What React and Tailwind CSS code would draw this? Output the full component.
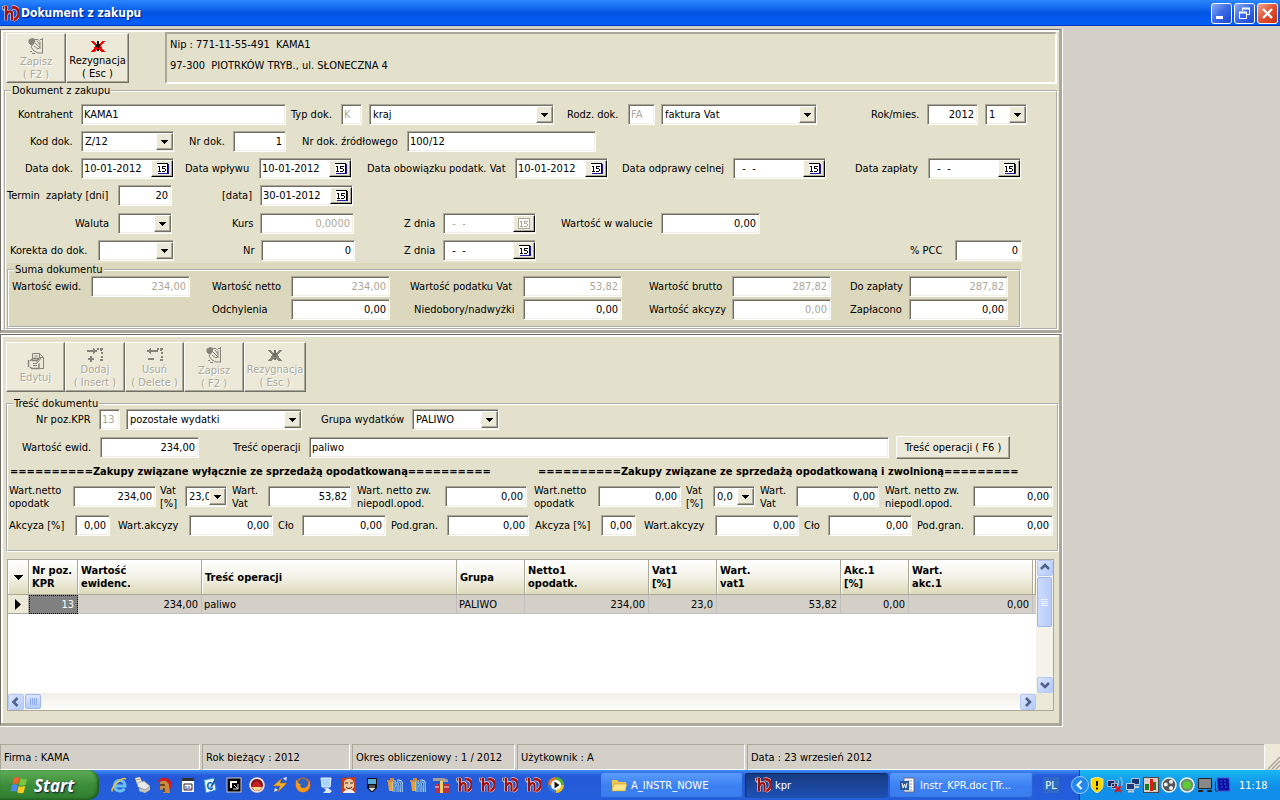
import React from "react";

const SUNKEN =
  "border border-t-[#aca899] border-l-[#aca899] border-r-white border-b-white bg-white shadow-[inset_1px_1px_0_#716f64,inset_-1px_-1px_0_#f1efe2]";
const RAISED =
  "bg-[#ece9d8] border border-t-white border-l-white border-r-[#716f64] border-b-[#716f64] shadow-[inset_-1px_-1px_0_#aca899]";

function slug(text) {
  return text.toLowerCase().replace(/[^a-z0-9ąćęłńóśźż]+/g, "-");
}

function Label({ id, l, children }) {
  return (
    <label htmlFor={id} className={`shrink-0 whitespace-pre leading-[13px] ${l}`}>
      {children}
    </label>
  );
}

function Text({ id, label, l = "", w, value, right, off, alt }) {
  const name = id || slug(label);
  return (
    <>
      {label && <Label id={name} l={l}>{label}</Label>}
      <input
        id={name}
        aria-label={alt}
        defaultValue={value}
        disabled={off}
        className={`h-[21px] shrink-0 rounded-none outline-none ${SUNKEN} ${w} ${right ? "pr-[3px] text-right" : "pl-[2px]"} ${off ? "text-[#aca899]" : "text-black"}`}
      />
    </>
  );
}

function Select({ id, label, l = "", w, value, alt }) {
  const name = id || slug(label);
  return (
    <>
      {label && <Label id={name} l={l}>{label}</Label>}
      <span className={`flex h-[21px] shrink-0 py-px pl-px ${SUNKEN} ${w}`}>
        <select
          id={name}
          aria-label={alt}
          defaultValue={value}
          className="min-w-0 flex-1 appearance-none overflow-hidden bg-transparent pl-[2px] outline-none"
        >
          <option>{value}</option>
        </select>
        <span className={`flex w-[17px] shrink-0 items-center justify-center ${RAISED}`}>
          <svg width="7" height="4" viewBox="0 0 7 4" shapeRendering="crispEdges" aria-hidden="true">
            <path d="M0 0h7v1h-1v1h-1v1h-1v1h-1v-1h-1v-1h-1v-1h-1z" fill="#000" />
          </svg>
        </span>
      </span>
    </>
  );
}

function DateField({ id, label, l = "", value, off }) {
  const name = id || slug(label);
  const ink = off ? "#aca899" : "#000";
  return (
    <>
      <Label id={name} l={l}>{label}</Label>
      <span className={`flex h-[21px] w-[93px] shrink-0 py-px pl-px ${SUNKEN}`}>
        <input
          id={name}
          defaultValue={value}
          disabled={off}
          className={`min-w-0 flex-1 bg-transparent pl-px outline-none ${off ? "text-[#aca899]" : "text-black"}`}
        />
        <button
          type="button"
          aria-label="Kalendarz"
          disabled={off}
          className="flex w-[22px] shrink-0 items-center justify-center border border-t-white border-l-white border-r-black border-b-black bg-[#ece9d8] shadow-[inset_-1px_-1px_0_#aca899]"
        >
          <svg width="13" height="12" viewBox="0 0 13 12" shapeRendering="crispEdges" aria-hidden="true">
            {!off && <path d="M2 11h11v-10h-1v9h-10z" fill="#1c1c9c" />}
            <path d="M1 1h10v9h-10z" fill="#fff" />
            <path d={off ? "M0 0h12v11h-12zM1 1v9h10v-9z" : "M1 0h11v10h-1v-9h-10z"} fillRule="evenodd" fill={ink} />
            <path d="M3 3h1v5h1v1h-3v-1h1v-4h-1v-1zM6 3h4v1h-3v1h2v1h1v2h-1v1h-3v-1h3v-2h-3z" fill={ink} />
          </svg>
        </button>
      </span>
    </>
  );
}

function Row({ h = "h-[27px]", children, className = "" }) {
  return <div className={`flex items-center ${h} ${className}`}>{children}</div>;
}

/* ---- toolbar ---- */
function HandIcon({ edit }) {
  return edit ? (
    <svg width="18" height="18" viewBox="0 0 18 18" fill="none" stroke="#85837a" aria-hidden="true">
      <path d="M5.500 6V1.500h7l4 4v11h-4M12.500 1.500v4h4M7.500 4h3" />
      <path d="M1.500 8v7M3 9l3-2.500h6l-3 3M5 8.500l4 0M3 15l2 1.500h7v-5" strokeWidth="1.400" />
      <path d="M6 11.500h4M6 13.500h4M10 11l5-6" />
    </svg>
  ) : (
    <svg width="16" height="16" viewBox="0 0 16 16" fill="none" stroke="#85837a" aria-hidden="true">
      <path d="M1 2l3-1.500 3 1-1 4-3 1.500-2-2z" fill="#85837a" />
      <path d="M6 1.500h4l2 2M14.500 0v15M12 1.500h3M12 4v7M5 6l-2 3 3 4 4 2h5M7 5l4 4M9 3l3 4M6 8l4 3 2-2" />
      <path d="M2 13.500h2M4 15.500h3" />
    </svg>
  );
}
function CancelIcon({ off }) {
  return (
    <svg width="14" height="14" viewBox="0 0 14 14" shapeRendering="crispEdges" aria-hidden="true">
      <path d="M0 2h3v1h1v1h1v1h4v-1h1v-1h1v-1h3v1h-1v1h-1v1h-1v1h-1v2h1v2h1v1h1v1h1v1h-4v-1h-1v-1h-1v-1h-2v1h-1v1h-1v1h-4v-1h1v-1h1v-1h1v-2h1v-2h-1v-1h-1v-1h-1v-1h-1z" fill={off ? "#85837a" : "#f00"} />
      <path d="M6 2h2v3h1v3h-1v1h-2v-1h-1v-3h1zM6 10h2v2h-2z" fill={off ? "#6f6d66" : "#111"} />
    </svg>
  );
}
function RowIcon({ remove }) {
  return (
    <svg width="16" height="15" viewBox="0 0 16 15" fill="#85837a" shapeRendering="crispEdges" aria-hidden="true">
      <path d="M13 1h3v2h-1v1h-2zM14 5h2v2h-2zM14 9h2v2h-2zM13 12h3v2h-3zM10 1h2v2h-2z" />
      {remove ? (
        <path d="M0 3h2v-1h1v-1h1v2h7v2h-7v2h-1v-1h-1v-1h-2zM1 11h6v2h-6z" />
      ) : (
        <path d="M0 3h6v-2h1v1h1v1h2v2h-2v1h-1v1h-1v-2h-6zM3 9h2v2h2v2h-2v2h-2v-2h-2v-2h2z" />
      )}
    </svg>
  );
}
function ToolButton({ w, icon, lines, off = true }) {
  return (
    <button
      type="button"
      disabled={off}
      className={`flex h-[50px] shrink-0 flex-col items-center justify-center pt-[2px] leading-[13px] ${w} ${RAISED} ${off ? "text-[#aca899] [text-shadow:1px_1px_0_#fff]" : "text-black"}`}
    >
      <span className="mb-px flex">{icon}</span>
      {lines.map((t) => (
        <span key={t} className="whitespace-nowrap">{t}</span>
      ))}
    </button>
  );
}

function Frame({ children }) {
  return (
    <div className="w-full max-w-[1063px] border-r border-b border-white">
      <div className="border-t border-r-[3px] border-b-[3px] border-l border-t-[#716f64] border-r-[#aca899] border-b-[#aca899] border-l-[#716f64] bg-[#e3e0cc]">
        <div className="border-t-2 border-l-2 border-white pl-px">{children}</div>
      </div>
    </div>
  );
}

function Group({ title, children, className = "" }) {
  return (
    <fieldset className={`min-w-0 border-2 border-white [border-style:groove] ${className}`}>
      <legend className="ml-[5px] h-[13px] px-px leading-[13px]">{title}</legend>
      {children}
    </fieldset>
  );
}

/* ---- list ---- */
const COLUMNS = [
  { t: ["Nr poz.", "KPR"], w: "w-[49px]", v: "13", right: true, active: true },
  { t: ["Wartość", "ewidenc."], w: "w-[124px]", v: "234,00", right: true },
  { t: ["Treść operacji"], w: "w-[255px]", v: "paliwo" },
  { t: ["Grupa"], w: "w-[68px]", v: "PALIWO" },
  { t: ["Netto1", "opodatk."], w: "w-[124px]", v: "234,00", right: true },
  { t: ["Vat1", "[%]"], w: "w-[68px]", v: "23,0", right: true },
  { t: ["Wart.", "vat1"], w: "w-[124px]", v: "53,82", right: true },
  { t: ["Akc.1", "[%]"], w: "w-[68px]", v: "0,00", right: true },
  { t: ["Wart.", "akc.1"], w: "w-[124px]", v: "0,00", right: true },
];

const ARROWS = {
  up: "M4 9l4-4 4 4",
  down: "M4 6l4 4 4-4",
  left: "M9.500 4l-4 4 4 4",
  right: "M6 4l4 4-4 4",
};
function ScrollButton({ dir, name }) {
  return (
    <button
      type="button"
      aria-label={name}
      className="flex size-[16px] shrink-0 items-center justify-center rounded-[2px] border border-[#b4c8f6] bg-gradient-to-br from-[#dbe5fe] to-[#b4cafb]"
    >
      <svg width="16" height="16" viewBox="0 0 16 16" className="shrink-0" fill="none" stroke="#4d6185" strokeWidth="2.500" aria-hidden="true">
        <path d={ARROWS[dir]} />
      </svg>
    </button>
  );
}

function Grid() {
  const head = "h-[35px] border-r border-b border-[#aca899] bg-gradient-to-b from-white via-[#f3f2e8] to-[#dedabb] text-left align-middle leading-[13px] font-bold shadow-[inset_1px_0_0_#fff]";
  return (
    <div className="mt-[7px] mr-[5px] ml-[3px] flex h-[152px] border border-[#aca899] bg-white">
      <div className="flex min-w-0 flex-1 flex-col">
        <div className="flex-1 overflow-hidden">
          <table className="w-full table-fixed border-separate border-spacing-0">
            <thead>
              <tr>
                <th className={`w-[21px] ${head}`} aria-label="Kolumny">
                  <svg width="9" height="5" viewBox="0 0 9 5" className="mx-auto" shapeRendering="crispEdges" aria-hidden="true">
                    <path d="M0 0h9l-4 5h-1z" />
                  </svg>
                </th>
                {COLUMNS.map((c, i) => (
                  <th key={i} scope="col" className={`pl-[3px] ${c.w} ${head}`}>
                    {c.t.map((t) => (
                      <span key={t} className="block whitespace-nowrap">{t}</span>
                    ))}
                  </th>
                ))}
                <th className={head} aria-label="Dalsze kolumny" />
              </tr>
            </thead>
            <tbody>
              <tr>
                <td className="h-[19px] border-r border-b border-[#aca899] bg-[#ece9d8]">
                  <svg width="6" height="11" viewBox="0 0 6 11" className="mx-auto" aria-hidden="true">
                    <path d="M0 0l6 5.500-6 5.500z" />
                  </svg>
                </td>
                {COLUMNS.map((c, i) => (
                  <td
                    key={i}
                    className={`h-[19px] border-r border-b pr-[3px] pl-[2px] leading-[13px] ${c.right ? "text-right" : ""} ${c.active ? "border border-dotted border-black bg-[#808080] text-white" : "border-[#c0c0c0] bg-[#d4d0c8]"}`}
                  >
                    {c.v}
                  </td>
                ))}
                <td className="border-b border-[#c0c0c0] bg-[#d4d0c8]" />
              </tr>
            </tbody>
          </table>
        </div>
        <div className="flex h-[17px] items-center bg-gradient-to-b from-[#f1efe8] to-[#fdfdfa]">
          <ScrollButton dir="left" name="W lewo" />
          <span className="ml-px flex h-[15px] w-[16px] items-center justify-center gap-px rounded-[2px] border border-[#9db6f0] bg-gradient-to-b from-[#dbe5fe] to-[#b4cafb]">
            {[0, 1, 2, 3].map((i) => (
              <i key={i} className="h-[7px] w-px bg-[#8caaf0]" />
            ))}
          </span>
          <span className="flex-1" />
          <ScrollButton dir="right" name="W prawo" />
        </div>
      </div>
      <div className="flex w-[17px] shrink-0 flex-col items-center bg-[#f4f2ea]">
        <ScrollButton dir="up" name="W górę" />
        <span className="mt-px flex h-[50px] w-[15px] flex-col items-center justify-center gap-px rounded-[2px] border border-[#9db6f0] bg-gradient-to-r from-[#cbdafd] to-[#b9cdfb]">
          {[0, 1, 2, 3].map((i) => (
            <i key={i} className="h-px w-[7px] bg-[#eef4fe]" />
          ))}
        </span>
        <span className="flex-1" />
        <ScrollButton dir="down" name="W dół" />
        <span className="h-[17px] w-full bg-[#ece9d8]" />
      </div>
    </div>
  );
}

/* ---- application mark and taskbar drawings ---- */
function KprMark({ s = 16 }) {
  return (
    <svg width={s} height={s} viewBox="0 0 16 16" aria-hidden="true">
      <path d="M0 1l5-1v5l-3 1-2-2z" fill="#b4b0b0" />
      <path d="M1 1.500l4-1v4l-4-1z" fill="#8c1818" />
      <path d="M9 2.500c8-2 9 9 2 11.500" fill="none" stroke="#e8c8c8" strokeWidth="3.800" />
      <path d="M9 2.500c8-2 9 9 2 11.500" fill="none" stroke="#a81414" strokeWidth="2.600" />
      <path d="M4 1v13.500M4.500 8.500c1.500-3.500 5-3 5 0v6" fill="none" stroke="#f0e0e0" strokeWidth="3.400" />
      <path d="M4 1v13.500M4.500 8.500c1.500-3.500 5-3 5 0v6" fill="none" stroke="#9c1010" strokeWidth="2.200" />
    </svg>
  );
}
function HMark() {
  return (
    <svg width="16" height="16" viewBox="0 0 16 16" aria-hidden="true">
      <path d="M1 5h7l-1 9h-5z" fill="#e8a23c" />
      <path d="M0 3h9v2h-9zM3 1h4v2h-4z" fill="#c98a4a" />
      <path d="M7 4v11M7.500 9c1-3 3.500-3 3.500 0v6M10 4c6-1 5 4 4.500 11" fill="none" stroke="#d8ecfa" strokeWidth="2.600" />
      <path d="M7 4v11M7.500 9c1-3 3.500-3 3.500 0v6M10 4c6-1 5 4 4.500 11" fill="none" stroke="#3c88c8" strokeWidth="1.500" />
    </svg>
  );
}
const I = ({ children }) => (
  <svg width="16" height="16" viewBox="0 0 16 16" aria-hidden="true">{children}</svg>
);
const LAUNCH = [
  ["Internet Explorer", <I><path d="M3 9h11c.5-7-10-7.500-10.500-1-.3 7 7.500 7.500 10 3.500" fill="none" stroke="#6cc0f8" strokeWidth="3" /><path d="M1.500 14.500c-3-3 9-15 13.500-12.500" fill="none" stroke="#f4c430" strokeWidth="1.500" /></I>],
  ["Drukarka", <I><path d="M1 1l5-1 2 5-5 2z" fill="#f0ead0" /><path d="M3 6l7-2 6 5-5 4-7-3z" fill="#e8e8e8" stroke="#888" strokeWidth=".6" /><path d="M5 11l6 2 5-4v4l-5 3-6-2z" fill="#c8c4b4" /><path d="M2 3l4-1" stroke="#c8a050" /></I>],
  ["Rome", <I><path d="M0 5c3-6 13-6 15 2l-1 5-3-4c-2-4-6-5-11-3z" fill="#cc1c1c" /><path d="M3 5c5-3 9 0 9 4l1 7H6l1-4-4 1z" fill="#c98a3c" /><path d="M3 8h5M7 11v4" stroke="#5a3010" strokeWidth="1.500" /></I>],
  ["Terminarz", <I><rect x="2" y="1" width="12" height="14" fill="#fff" /><path d="M2 1h12v3h-12z" fill="#333" /><path d="M4 7h8v6h-8z" fill="none" stroke="#223" /><path d="M5 10h2M9 9v3M5 12h3" stroke="#2244cc" /><path d="M10 12h2" stroke="#d22" /></I>],
  ["Edytor", <I><path d="M1 3l10-2 2 12-10 3z" fill="#e8f4ff" stroke="#2a90d8" /><path d="M9 6c-5-2-6 6-1 6l2-1" fill="none" stroke="#1470c0" strokeWidth="1.800" /><path d="M13 0l2 2-6 8-2 1 1-3z" fill="#2060b0" /></I>],
  ["Konsola", <I><rect x="1" y="1" width="14" height="14" fill="#000" stroke="#ccc" /><path d="M4 4h7v2h-5v5h-2z" fill="#fff" /><path d="M8 8l4 4M12 7v5h-5" stroke="#ddd" fill="none" /></I>],
  ["Przeglądarka", <I><circle cx="8" cy="8" r="7.800" fill="#f4e0d8" /><circle cx="8" cy="8" r="6" fill="#7c1414" /><path d="M3 10c1-5 4-6 5-6s4 2 5 6z" fill="#c82020" /><path d="M3 10h10c-1 5-9 5-10 0z" fill="#f8d890" /></I>],
  ["Winamp", <I><path d="M1 9l9-8-2 5h7l-9 9 2-6z" fill="#f0b030" stroke="#a86810" strokeWidth=".6" /><path d="M11 1l4-1-1 4zM2 15l1-4 3 2z" fill="#e8e8e8" /></I>],
  ["Firefox", <I><circle cx="8" cy="8" r="7.500" fill="#e66a10" /><circle cx="8" cy="6.500" r="5" fill="#2b64c0" /><path d="M1 2c-1 10 3 13 7 13s8-4 7-12c-1 5-3 8-6 8-3 0-5-2-3-4-3 0-4-2-5-5z" fill="#f89a1c" /></I>],
  ["Pulpit", <I><path d="M3 1h10l-1 9h-8z" fill="#a8d4ff" stroke="#e8f4ff" /><path d="M6 11h4l4 3-2 2h-7l3-3z" fill="#dfe8f0" /></I>],
  ["Gra", <I><path d="M1 1l14-1v16H0z" fill="#c83c10" /><path d="M3 5c2-5 9-4 10 1v4c-2 4-8 4-10 1z" fill="#f0c8a0" /><path d="M4 6h3M9 6h3M5 10c2 2 4 2 6 0" stroke="#402010" fill="none" /><path d="M2 16c2-5 10-5 12 0z" fill="#eee" /></I>],
  ["Pobieranie", <I><path d="M3 1h10v10l-4 4h-2l-4-4z" fill="#111" /><path d="M4 2h8v5h-8z" fill="#5aa8d8" /><path d="M5 9h6M5 11h6l-3 3z" fill="#ddd" stroke="#ddd" strokeWidth=".6" /></I>],
  ["Handel", <HMark />],
  ["Magazyn", <HMark />],
  ["Narzędzia", <I><path d="M0 1h11l4 2v2H8v-1H0z" fill="#a8a090" /><path d="M7 4h3v12H7z" fill="#f0d060" /><path d="M2 7h4v9H2zM11 7h5v9h-5z" fill="#b83048" /><path d="M2 10h4M11 10h5" stroke="#f8d8d8" /></I>],
  ["KPR 1", <KprMark />],
  ["KPR 2", <KprMark />],
  ["KPR 3", <KprMark />],
  ["KPR 4", <KprMark />],
  ["Media Player", <I><path d="M0 8a8 8 0 0 1 8-8v4L4 8z" fill="#e87830" /><path d="M8 0a8 8 0 0 1 8 8h-4L8 4z" fill="#58b030" /><path d="M0 8h4l4 4v4a8 8 0 0 1-8-8z" fill="#3478d8" /><path d="M16 8h-4l-4 4v4a8 8 0 0 0 8-8z" fill="#f0c020" /><circle cx="8" cy="8" r="5" fill="#fff" /><path d="M6.500 4.500l5 3.500-5 3.500z" fill="#111" /></I>],
];

const TRAY = [
  ["Zabezpieczenia", <I><path d="M2 2l6-2 6 2v6c0 4-3 6-6 8-3-2-6-4-6-8z" fill="#fcd800" stroke="#f8f0c0" strokeWidth=".8" /><path d="M8 4v5M8 10.500v2" stroke="#111" strokeWidth="2" /></I>],
  ["Sieć bezprzewodowa", <I><path d="M0.500 3.500h7v6h-7zM4.500 6.500h6v5h-6z" fill="#1c2c60" stroke="#a8b4cc" /><path d="M10 2c2 2 2 5 0 7M13 0c3 4 3 8 0 11" fill="none" stroke="#ccc" /><path d="M8 9l6 6M14 9l-6 6" stroke="#e01010" strokeWidth="2" /></I>],
  ["Sieć lokalna", <I><path d="M6.500 1.500h8v6h-8z" fill="#18306c" stroke="#b8c4dc" /><path d="M1.500 6.500h8v6h-8z" fill="#203878" stroke="#c0cce0" /><path d="M3 14.500h6M10 10h4" stroke="#ccc" strokeWidth="2" /></I>],
  ["Wykres", <I><rect width="16" height="16" fill="#d8d0c8" /><path d="M2 7h4v6h-4z" fill="#108020" /><path d="M6 2h4v12h-4z" fill="#e01818" /><path d="M10 5h3v8h-3z" fill="#208020" /><path d="M6 2h1v12h-1z" fill="#f8e020" /><path d="M0 .5h16M.5 0v16M0 15.500h16M15.500 0v16" stroke="#444" /></I>],
  ["Wentylator", <I><circle cx="8" cy="8" r="7" fill="#555" stroke="#eee" strokeWidth="1.500" /><circle cx="10" cy="4.800" r="2" fill="#eee" /><circle cx="4.800" cy="7.500" r="2" fill="#eee" /><circle cx="10" cy="11" r="2" fill="#eee" /></I>],
  ["Ochrona", <I><circle cx="8" cy="8" r="7" fill="#6c946c" stroke="#eee" strokeWidth="1.500" /><circle cx="8" cy="8" r="3.800" fill="#60d030" /></I>],
  ["Monitor", <I><path d="M1.500 1.500h13v10h-13z" fill="#888" stroke="#222" /><path d="M1 13h5v2h-5zM10 13h5v2h-5z" fill="#222" /></I>],
  ["Karta graficzna", <I><path d="M2 1h12l1 13h-12z" fill="#1010a0" stroke="#4858d8" /><path d="M5 4h2M9 4h2M5 7h2M9 7h2M6 10h2M10 10h2" stroke="#3058e8" /><path d="M.5 4v10h2" stroke="#222" fill="none" /></I>],
];

function Task({ icon, children, active, w }) {
  return (
    <button
      type="button"
      className={`flex h-[25px] shrink-0 items-center gap-[4px] rounded-[3px] pl-[10px] whitespace-nowrap text-white ${w} ${active ? "bg-gradient-to-b from-[#173a80] to-[#1e52b7] shadow-[inset_1px_1px_1px_#102c64]" : "bg-gradient-to-b from-[#5a9bfb] via-[#3c81f3] to-[#3a7cee] shadow-[inset_-1px_-1px_1px_#2760cf]"}`}
    >
      {icon}
      {children}
    </button>
  );
}

function Flag() {
  return (
    <svg width="19" height="18" viewBox="0 0 19 18" aria-hidden="true">
      <path d="M4 2c2-1.500 4-1 5.500 0L8 8.500C6.500 7.300 4.500 7 2.300 8z" fill="#f0602c" />
      <path d="M10.500 2.500c2 1 4 1.200 6.500 0L15.500 9c-2 1-4.500 1-6.500 0z" fill="#7cc83c" />
      <path d="M2 9c2-1 4-.8 5.800.4L6.300 16C4.500 14.700 2.500 14.700.5 15.500z" fill="#4c8cf0" />
      <path d="M8.700 10c2 1 4 1 6.500 0l-1.500 6.500c-2.300 1-4.500.8-6.500-.3z" fill="#f8cc20" />
    </svg>
  );
}

const STATUS = [
  ["Firma : KAMA", "w-[200px]"],
  ["Rok bieżący : 2012", "w-[148px]"],
  ["Okres obliczeniowy : 1 / 2012", "w-[163px]"],
  ["Użytkownik : A", "w-[228px]"],
  ["Data : 23 wrzesień 2012", "flex-1"],
];

function Half({ id, netL, vat, vatL, netto, tax, last, akcL }) {
  return (
    <div className="flex flex-col">
      <Row h="h-[29px]">
        <Text id={`netto${id}`} label={"Wart.netto\nopodatk"} l={netL} w="w-[83px]" value={netto} right />
        <Select id={`vat${id}`} label={"Vat\n[%]"} l={vatL} w="w-[42px]" value={vat} />
        <Text id={`wvat${id}`} label={"Wart.\nVat"} l="w-[41px] pl-[5px]" w="w-[83px]" value={tax} right />
        <Text id={`zw${id}`} label={"Wart. netto zw.\nniepodl.opod."} l="w-[94px] pl-[6px]" w={last} value="0,00" right />
      </Row>
      <Row h="h-[29px]">
        <Text id={`akc${id}`} label="Akcyza [%]" l={akcL} w="w-[35px]" value="0,00" right />
        <Text id={`wakc${id}`} label="Wart.akcyzy" l="w-[79px] pl-[8px]" w="w-[84px]" value="0,00" right />
        <Text id={`clo${id}`} label="Cło" l="w-[29px] pl-[5px]" w="w-[84px]" value="0,00" right />
        <Text id={`gran${id}`} label="Pod.gran." l="w-[61px] pl-[5px]" w={last} value="0,00" right />
      </Row>
    </div>
  );
}

export default function App() {
  return (
    <div className="flex min-h-screen flex-col bg-[#d4d0c8] font-['DejaVu_Sans_Condensed','Roboto',sans-serif] text-[11px] leading-[13px] text-black">
      <header className="flex h-[26px] items-center gap-[2px] bg-gradient-to-b from-[#2b86ff] via-[#0355e4] to-[#0460fa] px-[2px] shadow-[inset_0_-1px_0_#0038b8]">
        <KprMark s={17} />
        <h1 className="flex-1 text-[12px] font-bold text-white [text-shadow:1px_1px_1px_#0a1883]">Dokument z zakupu</h1>
        <div className="flex gap-[2px]">
          {["Minimalizuj", "Przywróć", "Zamknij"].map((n, i) => (
            <button
              key={n}
              type="button"
              aria-label={n}
              className={`flex size-[21px] items-center justify-center rounded-[3px] border border-white ${i === 2 ? "bg-gradient-to-br from-[#f0a088] via-[#e05030] to-[#c83010]" : "bg-gradient-to-br from-[#8aa8f4] via-[#3a68e4] to-[#1c48d0]"}`}
            >
              <svg width="19" height="19" viewBox="0 0 19 19" fill="none" stroke="#fff" className="shrink-0" aria-hidden="true">
                {i === 0 && <path d="M4 13.500h7" strokeWidth="3" />}
                {i === 1 && (
                  <>
                    <path d="M7.500 7V4.500h7v6h-2.500M4.500 8.500h7v6h-7z" />
                    <path d="M7 4.500h8M4 8.500h8" strokeWidth="2" />
                  </>
                )}
                {i === 2 && <path d="M5 5l9 9M14 5l-9 9" strokeWidth="2.400" />}
              </svg>
            </button>
          ))}
        </div>
      </header>

      <main className="flex flex-1 flex-col items-start pt-[3px]">
        <Frame>
          <div className="flex gap-[36px] pr-[2px]">
            <div className="flex pt-px pl-[2px]">
              <ToolButton w="w-[60px]" icon={<HandIcon />} lines={["Zapisz", "( F2 )"]} />
              <ToolButton w="w-[63px]" icon={<CancelIcon />} lines={["Rezygnacja", "( Esc )"]} off={false} />
            </div>
            <div className="flex h-[52px] flex-1 flex-col gap-[8px] border-2 border-t-[#aca899] border-r-white border-b-white border-l-[#aca899] pt-[4px] pl-[3px] whitespace-pre">
              <p>Nip : 771-11-55-491  KAMA1</p>
              <p>97-300  PIOTRKÓW TRYB., ul. SŁONECZNA 4</p>
            </div>
          </div>

          <Group title="Dokument z zakupu" className="mr-px">
            <div className="mt-[4px]">
              <Row>
                <Text label="Kontrahent" l="w-[75px] pl-[12px]" w="w-[205px]" value="KAMA1" />
                <Text label="Typ dok." l="w-[55px] pl-[5px]" w="w-[21px]" value="K" off />
                <span className="w-[7px]" />
                <Select id="kraj" alt="Typ dokumentu" w="w-[185px]" value="kraj" />
                <Text label="Rodz. dok." l="w-[74px] pl-[13px]" w="w-[27px]" value="FA" off />
                <span className="w-[6px]" />
                <Select id="faktura" alt="Rodzaj dokumentu" w="w-[156px]" value="faktura Vat" />
                <Text label="Rok/mies." l="w-[110px] pl-[54px]" w="w-[51px]" value="2012" right />
                <span className="w-[7px]" />
                <Select id="mies" alt="Miesiąc" w="w-[42px]" value="1" />
              </Row>
              <Row>
                <Select label="Kod dok." l="w-[75px] pl-[24px]" w="w-[93px]" value="Z/12" />
                <Text label="Nr dok." l="w-[59px] pl-[15px]" w="w-[53px]" value="1" right />
                <Text label="Nr dok. źródłowego" l="w-[121px] pl-[16px]" w="w-[189px]" value="100/12" />
              </Row>
              <Row>
                <DateField label="Data dok." l="w-[75px] pl-[19px]" value="10-01-2012" />
                <DateField label="Data wpływu" l="w-[85px] pl-[11px]" value="10-01-2012" />
                <DateField label="Data obowiązku podatk. Vat" l="w-[163px] pl-[15px]" value="10-01-2012" />
                <DateField label="Data odprawy celnej" l="w-[125px] pl-[14px]" value="  -  -" />
                <DateField label="Data zapłaty" l="w-[102px] pl-[29px]" value="  -  -" />
              </Row>
              <Row>
                <Text label="Termin  zapłaty [dni]" l="w-[112px] pl-px" w="w-[54px]" value="20" right />
                <DateField label="[data]" l="w-[88px] pl-[50px]" value="30-01-2012" />
              </Row>
              <Row h="h-[29px]">
                <Select label="Waluta" l="w-[112px] pl-[69px]" w="w-[54px]" value="" />
                <Text label="Kurs" l="w-[88px] pl-[60px]" w="w-[94px]" value="0,0000" right off />
                <DateField id="zdnia1" label="Z dnia" l="w-[89px] pl-[50px]" value="  -  -" off />
                <Text label="Wartość w walucie" l="w-[125px] pl-[25px]" w="w-[99px]" value="0,00" right />
              </Row>
              <Row h="h-[25px]">
                <Select label="Korekta do dok." l="w-[92px] pl-[4px]" w="w-[76px]" value="" />
                <Text label="Nr" l="w-[87px] pl-[69px]" w="w-[94px]" value="0" right />
                <DateField id="zdnia2" label="Z dnia" l="w-[88px] pl-[49px]" value="  -  -" />
                <Text label="% PCC" l="w-[419px] pl-[374px]" w="w-[67px]" value="0" right />
              </Row>
            </div>
            <div className="mr-[35px] ml-px bg-[#dcd8be]">
              <Group title="Suma dokumentu">
                <Row h="h-[21px]">
                  <Text id="s1" label="Wartość ewid." l="w-[82px] pl-[3px]" w="w-[99px]" value="234,00" right off />
                  <Text id="s2" label="Wartość netto" l="w-[101px] pl-[22px]" w="w-[99px]" value="234,00" right off />
                  <Text id="s3" label="Wartość podatku Vat" l="w-[133px] pl-[20px]" w="w-[99px]" value="53,82" right off />
                  <Text id="s4" label="Wartość brutto" l="w-[110px] pl-[27px]" w="w-[99px]" value="287,82" right off />
                  <Text id="s5" label="Do zapłaty" l="w-[78px] pl-[19px]" w="w-[99px]" value="287,82" right off />
                </Row>
                <Row h="h-[25px]" className="mb-[4px]">
                  <Text id="s6" label="Odchylenia" l="w-[282px] pl-[203px]" w="w-[99px]" value="0,00" right />
                  <Text id="s7" label="Niedobory/nadwyżki" l="w-[133px] pl-[24px]" w="w-[99px]" value="0,00" right />
                  <Text id="s8" label="Wartość akcyzy" l="w-[110px] pl-[27px]" w="w-[99px]" value="0,00" right off />
                  <Text id="s9" label="Zapłacono" l="w-[78px] pl-[19px]" w="w-[99px]" value="0,00" right />
                </Row>
              </Group>
            </div>
          </Group>
        </Frame>

        <Frame>
          <div className="flex pt-[5px] pl-[2px]">
            <ToolButton w="w-[59px]" icon={<HandIcon edit />} lines={["Edytuj"]} />
            <ToolButton w="w-[60px]" icon={<RowIcon />} lines={["Dodaj", "( Insert )"]} />
            <ToolButton w="w-[59px]" icon={<RowIcon remove />} lines={["Usuń", "( Delete )"]} />
            <ToolButton w="w-[60px]" icon={<HandIcon />} lines={["Zapisz", "( F2 )"]} />
            <ToolButton w="w-[62px]" icon={<CancelIcon off />} lines={["Rezygnacja", "( Esc )"]} />
          </div>

          <Group title="Treść dokumentu" className="mt-[5px] ml-[2px]">
            <Row h="h-[19px]">
              <Text label="Nr poz.KPR" l="w-[91px] pl-[28px]" w="w-[21px]" value="13" off />
              <span className="w-[6px]" />
              <Select id="wydatki" alt="Pozycja KPR" w="w-[176px]" value="pozostałe wydatki" />
              <Select label="Grupa wydatków" l="w-[110px] pl-[19px]" w="w-[87px]" value="PALIWO" />
            </Row>
            <Row h="h-[36px]">
              <Text id="ewid" label="Wartość ewid." l="w-[92px] pl-[14px]" w="w-[99px]" value="234,00" right />
              <Text label="Treść operacji" l="w-[110px] pl-[34px]" w="w-[580px]" value="paliwo" />
              <span className="w-[7px]" />
              <button type="button" className={`h-[23px] w-[114px] shrink-0 ${RAISED}`}>Treść operacji ( F6 )</button>
            </Row>
            <div className="flex h-[17px] font-bold whitespace-nowrap">
              <h2 className="w-[530px] pl-[2px]">==========Zakupy związane wyłącznie ze sprzedażą opodatkowaną==========</h2>
              <h2>==========Zakupy związane ze sprzedażą opodatkowaną i zwolnioną=========</h2>
            </div>
            <div className="flex pb-[10px]">
              <Half id="1" netL="w-[65px] pl-px" akcL="w-[67px] pl-px" vatL="w-[29px] pl-[4px]" netto="234,00" vat="23,0" tax="53,82" last="w-[82px]" />
              <Half id="2" netL="w-[69px] pl-[5px]" akcL="w-[72px] pl-[6px]" vatL="w-[32px] pl-[5px]" netto="0,00" vat="0,0" tax="0,00" last="w-[80px]" />
            </div>
          </Group>

          <Grid />
          <div className="h-[12px]" />
        </Frame>
      </main>

      <footer>
        <div className="flex h-[26px] gap-[2px]">
          {STATUS.map(([t, w]) => (
            <div key={t} className={`flex items-center border border-t-[#aca899] border-r-white border-b-white border-l-[#aca899] pl-[3px] whitespace-nowrap ${w}`}>
              {t}
            </div>
          ))}
          <svg width="15" height="25" viewBox="0 0 15 25" className="-ml-[2px] bg-[#ece9d8]" stroke="#aca899" strokeWidth="1.500" aria-hidden="true">
            <path d="M3 25L15 13M7 25l8-8M11 25l4-4" />
          </svg>
        </div>
        <nav className="flex h-[30px] items-center bg-gradient-to-b from-[#3f8cf3] from-0% via-[#2459d8] via-20% to-[#245edb]">
          <button
            type="button"
            className="flex h-full w-[99px] shrink-0 items-center gap-[5px] rounded-r-[10px] bg-gradient-to-b from-[#5eac56] via-[#3c8d3a] to-[#2f7d2f] pl-[10px] font-['Open_Sans',sans-serif] text-[17px] font-bold text-white italic shadow-[inset_-2px_-1px_3px_#1f5a1f] [text-shadow:1px_1px_2px_#113]"
          >
            <Flag />
            Start
          </button>
          <div className="ml-[12px] flex gap-[7px]">
            {LAUNCH.map(([n, icon]) => (
              <button key={n} type="button" aria-label={n}>{icon}</button>
            ))}
          </div>
          <div className="ml-auto flex gap-[2px]">
            <Task w="w-[142px]" icon={<I><path d="M1 3h5l2 2h7v9h-14z" fill="#f0c850" /><path d="M1 14l2-7h13l-2 7z" fill="#fce68c" stroke="#c89820" strokeWidth=".6" /></I>}>A_INSTR_NOWE</Task>
            <Task w="w-[143px]" active icon={<KprMark />}>kpr</Task>
            <Task w="w-[143px]" icon={<I><path d="M4 1h10v14h-10z" fill="#fff" stroke="#668" /><path d="M6 4h6M6 7h6M6 10h6M6 13h6" stroke="#99a" /><rect x="0" y="4" width="9" height="9" fill="#2b5797" /><path d="M2 6l1.200 5 1.300-4 1.300 4 1.200-5" fill="none" stroke="#fff" /></I>}>Instr_KPR.doc [Tr...</Task>
          </div>
          <span className="ml-[10px] flex h-[16px] w-[16px] items-center justify-center bg-[#316ac5] text-white">PL</span>
          <div className="relative ml-[20px] flex h-full w-[201px] shrink-0 items-center gap-[2px] border-l border-[#123c9c] bg-gradient-to-b from-[#19b9f3] via-[#1290e8] to-[#0f8eea] pl-[9px]">
            <button type="button" aria-label="Pokaż ukryte ikony" className="absolute top-[6px] -left-[9px]">
              <svg width="18" height="18" viewBox="0 0 18 18" fill="none" aria-hidden="true">
                <circle cx="9" cy="9" r="8.500" fill="#2288ee" stroke="#9ccaf8" />
                <path d="M10.500 5l-4 4 4 4" stroke="#fff" strokeWidth="2" />
              </svg>
            </button>
            {TRAY.map(([n, icon]) => (
              <button key={n} type="button" aria-label={n}>{icon}</button>
            ))}
            <time className="ml-[6px] text-white">11:18</time>
          </div>
        </nav>
      </footer>
    </div>
  );
}
